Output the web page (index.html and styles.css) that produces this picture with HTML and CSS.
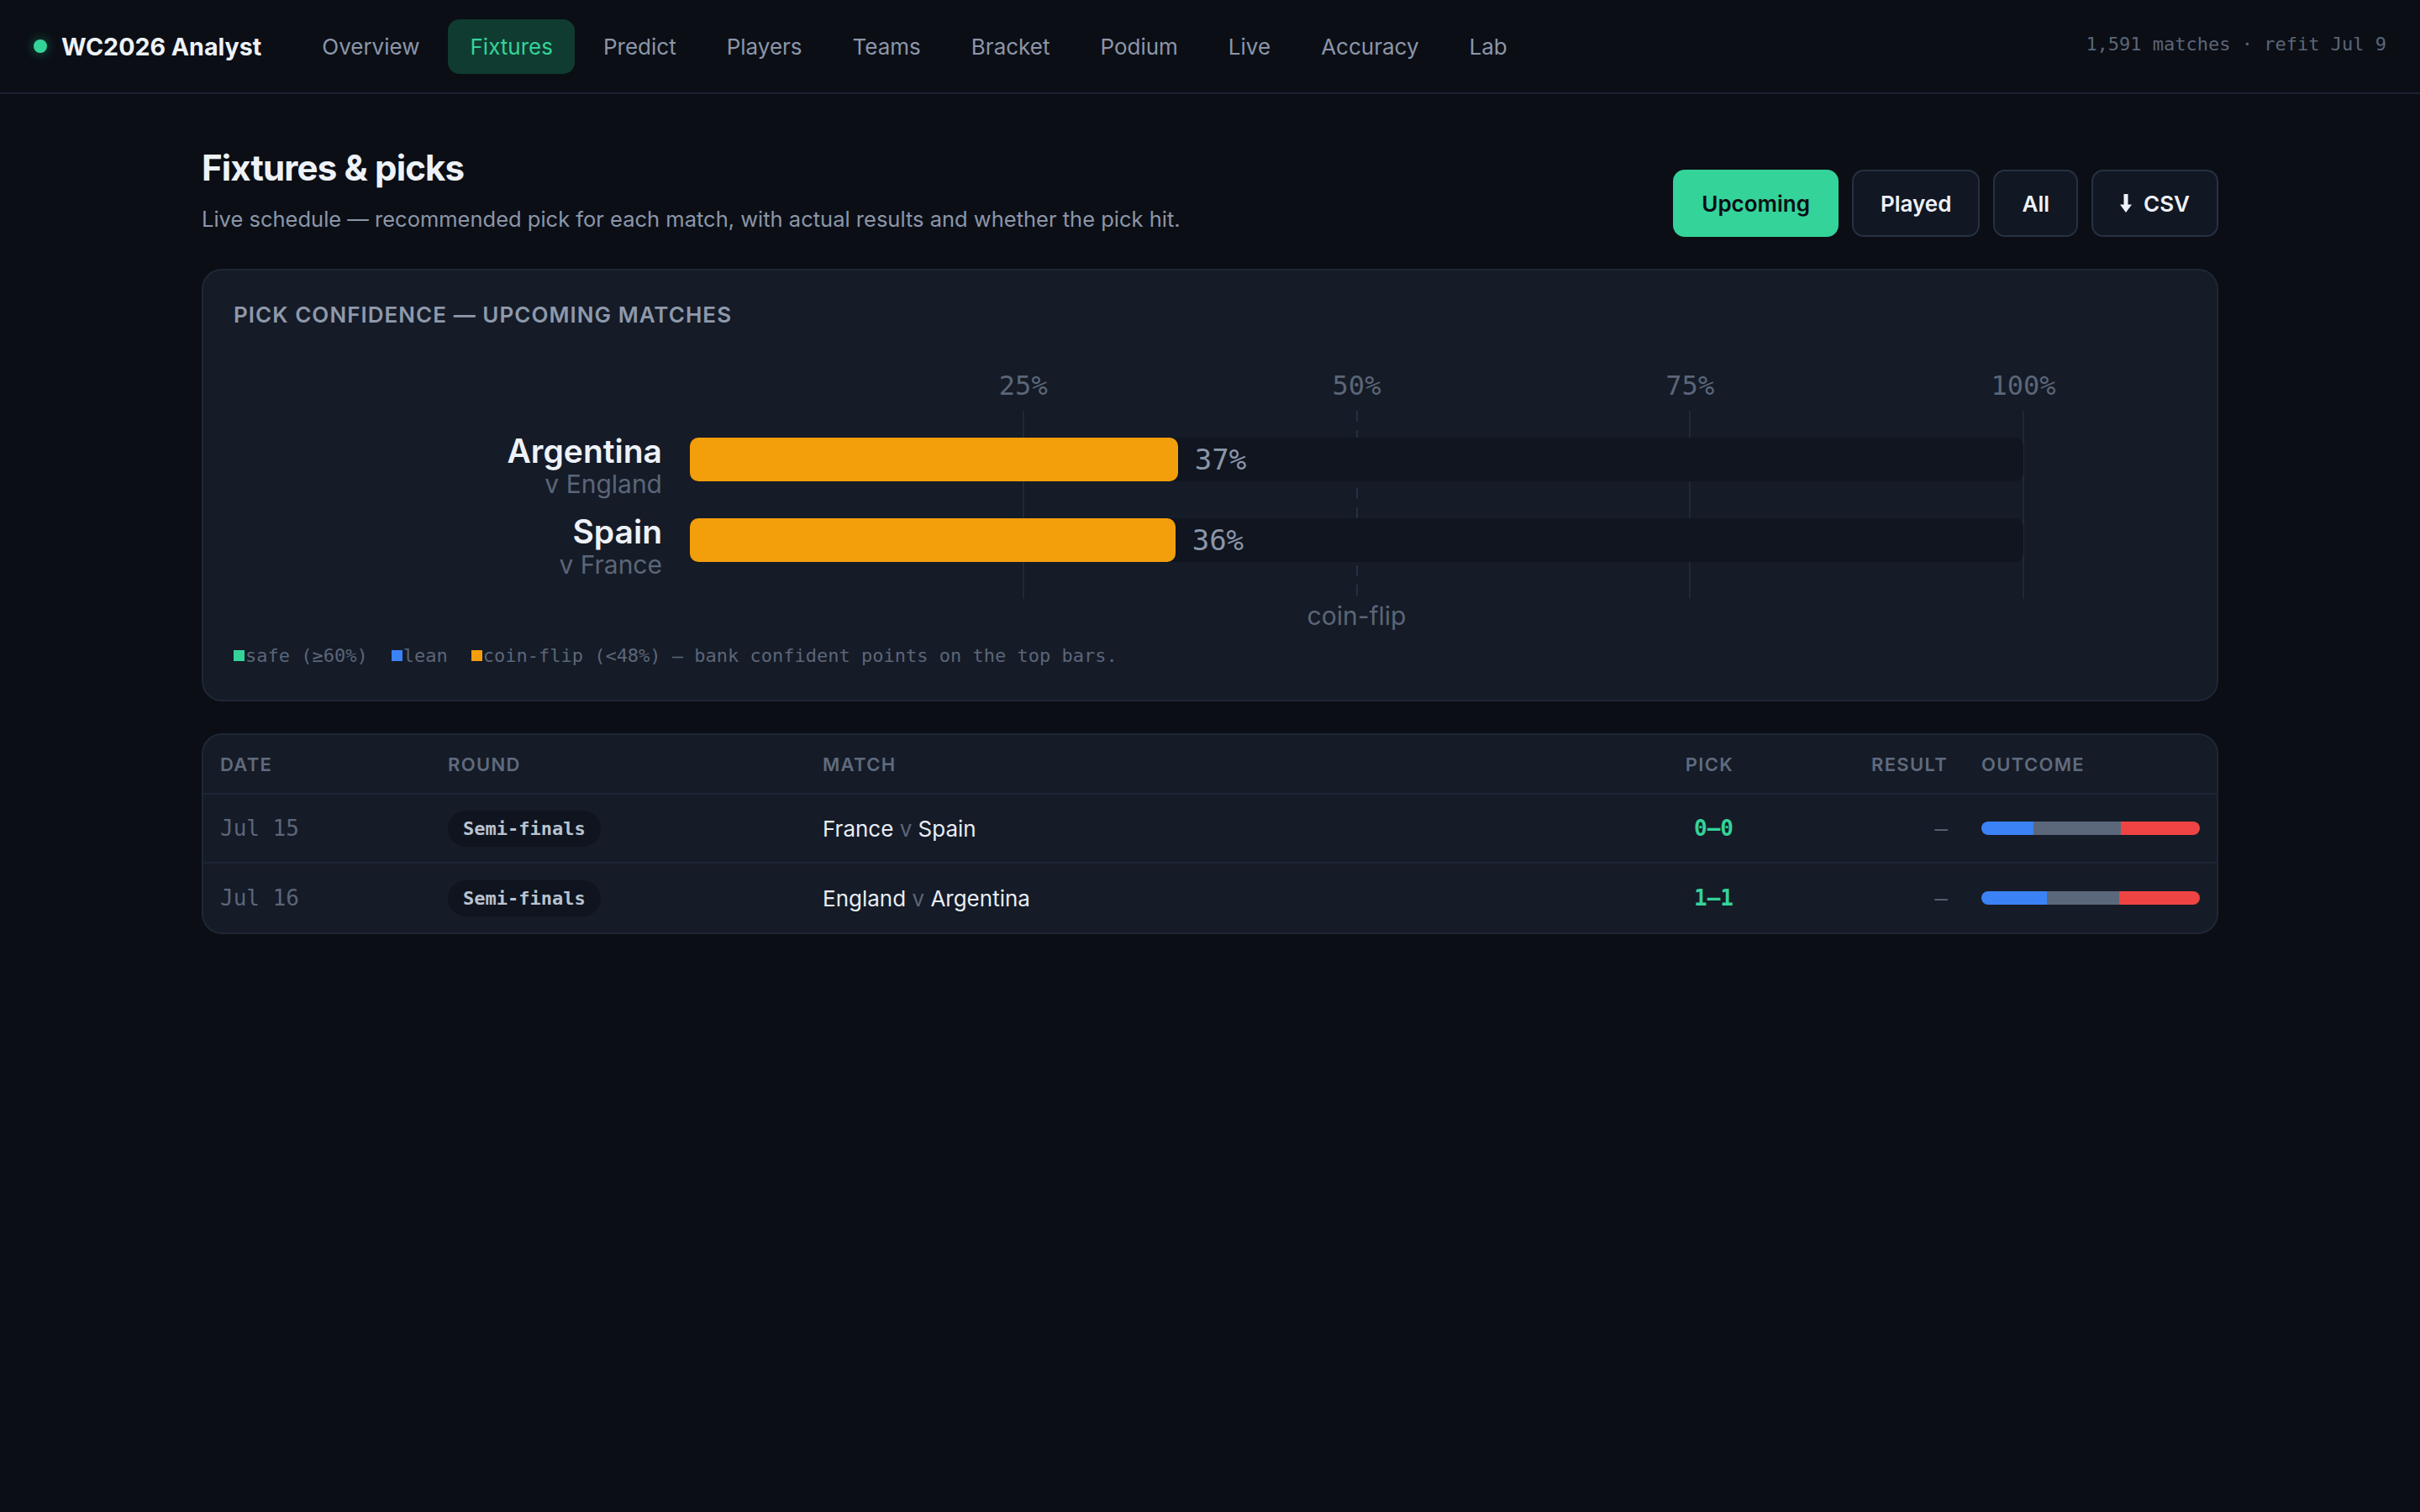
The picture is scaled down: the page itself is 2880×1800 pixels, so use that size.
FILE: index.html
```html
<!DOCTYPE html>
<html lang="en">
<head>
    <meta charset="UTF-8">
    <meta name="viewport" content="width=device-width, initial-scale=1.0">
    <title>WC2026 Analyst · Fixtures</title>
    <link rel="stylesheet" href="styles.css">
</head>
<body>
    <nav class="topbar">
        <div class="brand">
            <span class="brand-dot"></span>
            <span class="brand-name">WC2026 Analyst</span>
        </div>
        <div class="nav-links">
            <a class="nav-link" href="#">Overview</a>
            <a class="nav-link active" href="#">Fixtures</a>
            <a class="nav-link" href="#">Predict</a>
            <a class="nav-link" href="#">Players</a>
            <a class="nav-link" href="#">Teams</a>
            <a class="nav-link" href="#">Bracket</a>
            <a class="nav-link" href="#">Podium</a>
            <a class="nav-link" href="#">Live</a>
            <a class="nav-link" href="#">Accuracy</a>
            <a class="nav-link" href="#">Lab</a>
        </div>
        <div class="nav-meta">1,591 matches · refit Jul 9</div>
    </nav>

    <main class="page">
        <header class="page-head">
            <div>
                <h1>Fixtures &amp; picks</h1>
                <p class="subtitle">Live schedule — recommended pick for each match, with actual results and whether the pick hit.</p>
            </div>
            <div class="filters">
                <button class="btn primary">Upcoming</button>
                <button class="btn">Played</button>
                <button class="btn">All</button>
                <button class="btn">
                    <svg class="btn-icon" viewBox="0 0 14 22" aria-hidden="true">
                        <path d="M4.5 0h5v12.5h4.5L7 22 0 12.5h4.5z" fill="currentColor"/>
                    </svg>
                    CSV
                </button>
            </div>
        </header>

        <section class="card chart-card">
            <h2 class="card-title">Pick confidence — upcoming matches</h2>

            <div class="axis">
                <div></div>
                <div class="ticks">
                    <span class="tick" style="left: 25%">25%</span>
                    <span class="tick" style="left: 50%">50%</span>
                    <span class="tick" style="left: 75%">75%</span>
                    <span class="tick" style="left: 100%">100%</span>
                </div>
            </div>

            <div class="plot">
                <div class="gridlines">
                    <span class="gridline" style="left: 25%"></span>
                    <span class="gridline dashed" style="left: 50%">
                        <span class="gridline-note">coin-flip</span>
                    </span>
                    <span class="gridline" style="left: 75%"></span>
                    <span class="gridline" style="left: 100%"></span>
                </div>

                <div class="pick-row">
                    <div class="pick-label">
                        <div class="pick-team">Argentina</div>
                        <div class="pick-opp">v England</div>
                    </div>
                    <div class="track">
                        <div class="bar coin" style="width: 36.6%"></div>
                        <span class="pct">37%</span>
                    </div>
                </div>

                <div class="pick-row">
                    <div class="pick-label">
                        <div class="pick-team">Spain</div>
                        <div class="pick-opp">v France</div>
                    </div>
                    <div class="track">
                        <div class="bar coin" style="width: 36.4%"></div>
                        <span class="pct">36%</span>
                    </div>
                </div>
            </div>

            <div class="legend">
                <span class="legend-item"><i class="swatch safe"></i>safe (≥60%)</span>
                <span class="legend-item"><i class="swatch lean"></i>lean</span>
                <span class="legend-item"><i class="swatch coin"></i>coin-flip (&lt;48%) — bank confident points on the top bars.</span>
            </div>
        </section>

        <section class="card table-card">
            <div class="fx-row fx-head">
                <div>Date</div>
                <div>Round</div>
                <div>Match</div>
                <div class="num">Pick</div>
                <div class="num">Result</div>
                <div>Outcome</div>
            </div>

            <div class="fx-row">
                <div class="date">Jul 15</div>
                <div><span class="round">Semi-finals</span></div>
                <div class="match">France <span class="vs">v</span> Spain</div>
                <div class="num pick">0–0</div>
                <div class="num result">–</div>
                <div>
                    <div class="outcome">
                        <span class="seg home" style="width: 24%"></span>
                        <span class="seg draw" style="width: 40%"></span>
                        <span class="seg away" style="width: 36%"></span>
                    </div>
                </div>
            </div>

            <div class="fx-row">
                <div class="date">Jul 16</div>
                <div><span class="round">Semi-finals</span></div>
                <div class="match">England <span class="vs">v</span> Argentina</div>
                <div class="num pick">1–1</div>
                <div class="num result">–</div>
                <div>
                    <div class="outcome">
                        <span class="seg home" style="width: 30%"></span>
                        <span class="seg draw" style="width: 33%"></span>
                        <span class="seg away" style="width: 37%"></span>
                    </div>
                </div>
            </div>
        </section>
    </main>
</body>
</html>
```

FILE: styles.css
```css
* {
    box-sizing: border-box;
}

body {
    margin: 0;
    min-height: 100vh;
    background-color: #0b0e15;
    color: #e8edf5;
    font-family: Inter, "Noto Sans", "Liberation Sans", sans-serif;
}

/* top navigation */
.topbar {
    display: flex;
    align-items: center;
    height: 112px;
    padding: 0 40px;
    border-bottom: 2px solid #1a2130;
}

.brand {
    display: flex;
    align-items: center;
    gap: 17px;
    margin-right: 46px;
}

.brand-dot {
    width: 16px;
    height: 16px;
    border-radius: 50%;
    background-color: #34d399;
    box-shadow: 0 0 14px rgba(52, 211, 153, 0.45);
}

.brand-name {
    font-size: 28.6px;
    font-weight: 700;
    color: #eef2f8;
}

.nav-links {
    display: flex;
    gap: 8px;
}

.nav-link {
    display: flex;
    align-items: center;
    height: 65px;
    padding: 0 26px;
    border-radius: 14px;
    font-size: 26px;
    color: #8b96a9;
    text-decoration: none;
}

.nav-link.active {
    background-color: #103b30;
    color: #34d399;
}

.nav-meta {
    margin-left: auto;
    margin-bottom: 6px;
    font-family: "DejaVu Sans Mono", "Liberation Mono", monospace;
    font-size: 22px;
    color: #5b6678;
}

/* page */
.page {
    max-width: 2400px;
    margin: 0 auto;
    padding-top: 64px;
}

.page-head {
    display: flex;
    justify-content: space-between;
    align-items: flex-end;
}

h1 {
    margin: 0;
    font-size: 42px;
    line-height: 48px;
    font-weight: 700;
    letter-spacing: -0.02em;
    color: #eef2f8;
}

.subtitle {
    margin: 16px 0 0;
    font-size: 25.5px;
    line-height: 42px;
    color: #8b96a9;
}

.filters {
    display: flex;
    gap: 16px;
}

.btn {
    display: flex;
    align-items: center;
    gap: 14px;
    height: 80px;
    padding: 0 32px;
    border: 2px solid #273142;
    border-radius: 14px;
    background-color: #111723;
    color: #eef2f8;
    font-family: inherit;
    font-size: 26px;
    font-weight: 600;
}

.btn.primary {
    background-color: #34d399;
    border-color: #34d399;
    color: #0b0e15;
}

.btn-icon {
    width: 14px;
    height: 22px;
}

/* cards */
.card {
    background-color: #151b27;
    border: 2px solid #1f2736;
    border-radius: 24px;
}

.chart-card {
    margin-top: 38px;
    padding: 36px;
}

.card-title {
    margin: 0;
    font-size: 26px;
    line-height: 34px;
    font-weight: 600;
    letter-spacing: 0.04em;
    text-transform: uppercase;
    color: #8e99ab;
}

/* confidence chart */
.axis,
.pick-row {
    display: grid;
    grid-template-columns: 510px 1587px;
    column-gap: 33px;
}

.axis {
    height: 40px;
    margin-top: 47px;
}

.ticks {
    position: relative;
}

.tick {
    position: absolute;
    top: 0;
    transform: translateX(-50%);
    font-family: "DejaVu Sans Mono", "Liberation Mono", monospace;
    font-size: 32px;
    line-height: 40px;
    color: #5b6678;
}

.plot {
    position: relative;
    display: flex;
    flex-direction: column;
    gap: 18px;
    margin-top: 10px;
    padding: 26px 0 24px;
}

.gridlines {
    position: absolute;
    top: 0;
    bottom: 0;
    left: 543px;
    width: 1587px;
}

.gridline {
    position: absolute;
    top: 0;
    bottom: 0;
    width: 2px;
    margin-left: -1px;
    background-color: #1f2837;
}

.gridline.dashed {
    background: repeating-linear-gradient(to bottom, #253043 0 13px, transparent 13px 23px);
}

.gridline-note {
    position: absolute;
    top: calc(100% + 2px);
    left: 50%;
    transform: translateX(-50%);
    font-size: 30px;
    line-height: 36px;
    white-space: nowrap;
    color: #5b6678;
}

.pick-label {
    text-align: right;
}

.pick-team {
    font-size: 39px;
    line-height: 44px;
    font-weight: 600;
    color: #eef2f8;
}

.pick-opp {
    font-size: 30px;
    line-height: 34px;
    color: #5b6678;
}

.track {
    position: relative;
    z-index: 1;
    display: flex;
    align-items: center;
    height: 52px;
    margin-top: 6px;
    border-radius: 10px;
    background-color: #10151f;
}

.bar {
    height: 100%;
    border-radius: 10px;
}

.bar.coin {
    background-color: #f39e0b;
}

.pct {
    margin-left: 20px;
    font-family: "DejaVu Sans Mono", "Liberation Mono", monospace;
    font-size: 34px;
    color: #8b96a9;
}

.legend {
    display: flex;
    gap: 28px;
    margin-top: 51px;
    font-family: "DejaVu Sans Mono", "Liberation Mono", monospace;
    font-size: 22px;
    line-height: 33px;
    color: #5b6678;
}

.legend-item {
    display: flex;
    align-items: center;
}

.swatch {
    width: 13px;
    height: 13px;
    margin-right: 1px;
}

.swatch.safe {
    background-color: #34d399;
}

.swatch.lean {
    background-color: #3b82f6;
}

.swatch.coin {
    background-color: #f59e0b;
}

/* fixtures table */
.table-card {
    margin-top: 38px;
    overflow: hidden;
}

.fx-row {
    display: grid;
    grid-template-columns: 271px 446px 1fr 220px 255px 300px;
    align-items: center;
    height: 82px;
    border-bottom: 2px solid #1d2534;
}

.fx-row:last-child {
    height: 82px;
    border-bottom: none;
}

.fx-row > div {
    padding: 0 20px;
}

.fx-head {
    height: 71px;
    font-size: 22px;
    font-weight: 600;
    letter-spacing: 0.06em;
    text-transform: uppercase;
    color: #5f6b7e;
}

.num {
    text-align: right;
}

.date {
    font-family: "DejaVu Sans Mono", "Liberation Mono", monospace;
    font-size: 26px;
    color: #5b6678;
}

.round {
    display: inline-block;
    padding: 6px 18px;
    border-radius: 22px;
    background-color: #0f141e;
    font-family: "DejaVu Sans Mono", "Liberation Mono", monospace;
    font-size: 22px;
    line-height: 31px;
    font-weight: 700;
    color: #b9c3d1;
}

.match {
    font-size: 26px;
    color: #e8edf5;
}

.vs {
    color: #5b6678;
}

.pick {
    font-family: "DejaVu Sans Mono", "Liberation Mono", monospace;
    font-size: 26px;
    font-weight: 700;
    color: #34d399;
}

.result {
    font-family: "DejaVu Sans Mono", "Liberation Mono", monospace;
    font-size: 26px;
    color: #5b6678;
}

.outcome {
    display: flex;
    height: 16px;
    border-radius: 8px;
    overflow: hidden;
}

.seg.home {
    background-color: #3b82f6;
}

.seg.draw {
    background-color: #5b677a;
}

.seg.away {
    background-color: #ef4444;
}
```
